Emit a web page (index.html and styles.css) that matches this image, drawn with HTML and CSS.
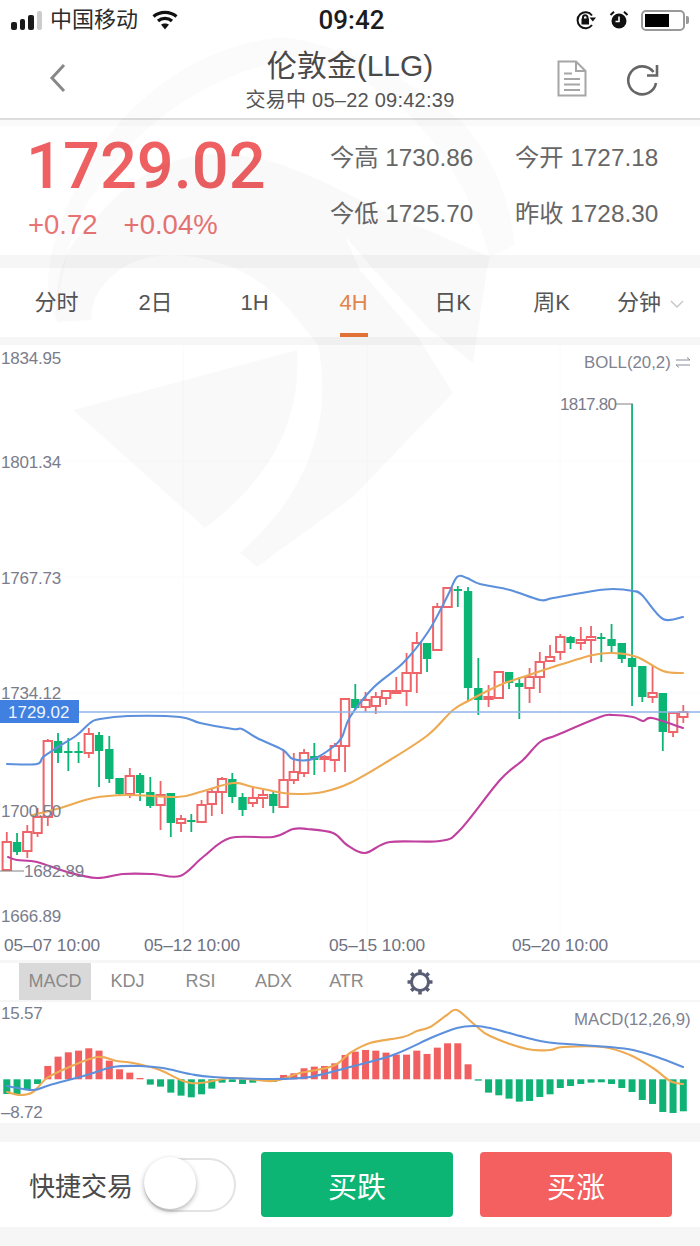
FILE: index.html
```html
<!DOCTYPE html>
<html lang="zh">
<head>
<meta charset="utf-8">
<title>伦敦金(LLG)</title>
<link rel="stylesheet" href="styles.css">
</head>
<body>
<div class="page">
  <header class="status">
    <div class="status-left">
      <div class="signal"><i class="s1"></i><i class="s2"></i><i class="s3"></i><i class="s4"></i></div>
      <span class="carrier">中国移动</span>
      <svg class="wifi" width="26" height="20" viewBox="0 0 26 20"><path d="M1.5 6.5C8 1 18 1 24.500 6.500" /><path d="M6 11C10 7.500 16 7.500 20 11" /><path class="wifi-dot" d="M13 19.500L9 14.500C11 13 15 13 17 14.500Z"/></svg>
    </div>
    <div class="time">09:42</div>
    <div class="status-right">
      <svg width="22" height="20" viewBox="0 0 22 20" class="lock"><path d="M17 5.500A8 8 0 1 0 17 15"/><path class="fill" d="M14.500 7.500H21L17.800 11.500Z"/><rect class="fill" x="6.500" y="8.500" width="7.500" height="6"/><path d="M8 9V7.500A2.200 2.200 0 0 1 12.500 7.500V9"/></svg>
      <svg width="20" height="20" viewBox="0 0 20 20" class="alarm"><circle class="fill" cx="10" cy="11" r="7.500"/><path class="hand" d="M10 6.500V11.500H6.500"/><path d="M1.500 5L5 1.800M18.500 5L15 1.800"/></svg>
      <div class="battery"><i></i></div>
    </div>
  </header>

  <nav class="nav">
    <svg class="back" width="18" height="30" viewBox="0 0 18 30"><path d="M15 2L3 15L15 28"/></svg>
    <div class="title-box">
      <h1 class="title">伦敦金(LLG)</h1>
      <p class="subtitle">交易中 05–22 09:42:39</p>
    </div>
    <svg class="doc" width="30" height="37" viewBox="0 0 30 37"><path d="M1.500 1.500H19L28.500 11V35.500H1.500Z"/><path d="M19 1.500V11H28.500"/><path d="M7 13.500H15M7 19H23M7 24.500H23M7 30H23"/></svg>
    <svg class="refresh" width="34" height="34" viewBox="0 0 34 34"><path d="M27.500 10A14 14 0 1 0 30 21"/><path d="M31 3V13.500H21"/></svg>
  </nav>

  <section class="quote">
    <div class="quote-main">
      <div class="price">1729.02</div>
      <div class="change"><span>+0.72</span><span>+0.04%</span></div>
    </div>
    <div class="stats">
      <div>今高 1730.86</div><div>今开 1727.18</div>
      <div>今低 1725.70</div><div>昨收 1728.30</div>
    </div>
  </section>

  <div class="band band-13"></div>

  <div class="tabs">
    <div class="tab">分时</div>
    <div class="tab">2日</div>
    <div class="tab">1H</div>
    <div class="tab tab-active">4H</div>
    <div class="tab">日K</div>
    <div class="tab">周K</div>
    <div class="tab">分钟<svg class="chev" width="14" height="8" viewBox="0 0 14 8"><path d="M1 1L7 7L13 1"/></svg></div>
  </div>

  <div class="band band-8"></div>

  <section class="chart">
    <svg id="kline" width="700" height="615" viewBox="0 345 700 615">
      <g id="grid"></g>
      <g id="candles"></g>
      <g id="boll"></g>
      <path class="price-line" d="M79 712H700"/>
      <path class="tick" d="M615 404H633M0 871H24"/>
      <text class="axis" x="1" y="364">1834.95</text>
      <text class="axis" x="1" y="468">1801.34</text>
      <text class="axis" x="1" y="584">1767.73</text>
      <text class="axis" x="1" y="699">1734.12</text>
      <text class="axis" x="1" y="817">1700.50</text>
      <text class="axis" x="24" y="877">1682.89</text>
      <text class="axis" x="1" y="922">1666.89</text>
      <text class="axis axis-tight" x="560" y="410">1817.80</text>
      <text class="axis-sm" x="584" y="368">BOLL(20,2)</text>
      <path class="swap" d="M676 360H690L687 357.500M690 365H676L679 367.500"/>
      <rect class="price-tag" x="0" y="700" width="79" height="23"/>
      <text class="price-tag-text" x="8" y="718">1729.02</text>
      <text class="date" x="4" y="951">05–07 10:00</text>
      <text class="date" x="144" y="951">05–12 10:00</text>
      <text class="date" x="329" y="951">05–15 10:00</text>
      <text class="date" x="512" y="951">05–20 10:00</text>
    </svg>
  </section>

  <div class="band band-3"></div>

  <div class="indicators">
    <div class="ind ind-active">MACD</div>
    <div class="ind">KDJ</div>
    <div class="ind">RSI</div>
    <div class="ind">ADX</div>
    <div class="ind">ATR</div>
    <div class="ind">
      <svg class="gear" width="28" height="28" viewBox="0 0 28 28"><circle cx="14" cy="14" r="8.500"/><path d="M14 1.500V5M14 23V26.500M1.500 14H5M23 14H26.500M5.200 5.200L7.600 7.600M20.400 20.400L22.800 22.800M22.800 5.200L20.400 7.600M7.600 20.400L5.200 22.800"/></svg>
    </div>
  </div>

  <div class="band band-2"></div>

  <section class="macd">
    <svg id="macd" width="700" height="121" viewBox="0 1002 700 121">
      <g id="bars"></g>
      <g id="macd-lines"></g>
      <text class="axis" x="1" y="1019">15.57</text>
      <text class="axis" x="1" y="1118">–8.72</text>
      <text class="axis-sm" x="574" y="1025">MACD(12,26,9)</text>
    </svg>
  </section>

  <div class="band band-19"></div>

  <section class="trade">
    <span class="trade-label">快捷交易</span>
    <div class="toggle"><i class="thumb"></i></div>
    <button class="btn btn-down">买跌</button>
    <button class="btn btn-up">买涨</button>
  </section>

  <div class="band band-rest"></div>

  <svg class="watermark" width="700" height="1246" viewBox="0 0 700 1246">
    <path class="wm-strong" d="M73 410L297 350C302 420 270 480 205 528Z"/>
    <path class="wm-faint" d="M47 300C48 255 55 235 70 200C110 110 190 45 283 37C350 45 420 85 465 125C495 160 510 200 515 245L490 257C470 190 430 120 370 85C340 68 320 60 300 58C210 70 130 130 97 190C75 215 62 260 57 322Z"/>
    <path class="wm-strong" d="M57 322C52 270 70 240 97 217C120 190 150 163 200 155C250 148 300 170 340 190C390 215 440 235 490 257L487 270L473 363L430 330L372 268L345 236L360 270L418 337L453 393L353 497L257 567L240 553C300 500 335 430 318 345L300 323C280 295 250 270 215 262C175 250 140 255 120 270C100 285 90 300 92 320Z"/>
  </svg>
</div>
<script src="chart.js"></script>
</body>
</html>
```

FILE: styles.css
```css
* { box-sizing: border-box; }
html, body { margin: 0; padding: 0; background: #fff; }
body { font-family: "Liberation Sans", "Noto Sans CJK SC", sans-serif; }
.page { position: relative; width: 700px; height: 1246px; overflow: hidden; display: flex; flex-direction: column; }

.status { height: 40px; flex: none; display: grid; grid-template-columns: 1fr auto 1fr; align-items: center; padding: 0 11px; color: #222; }
.status-left { display: flex; align-items: center; }
.signal { display: flex; align-items: flex-end; gap: 3px; height: 20px; width: 31px; }
.signal i { display: block; width: 5.500px; background: #1a1a1a; border-radius: 2px; }
.s1 { height: 8px; } .s2 { height: 11px; } .s3 { height: 15px; }
.signal .s4 { height: 19px; background: #ccc; }
.carrier { font-size: 22px; margin-left: 8px; line-height: 30px; color: #2b2b2b; }
.wifi { margin-left: 14px; }
.wifi path { fill: none; stroke: #111; stroke-width: 3.200; }
.wifi .wifi-dot { fill: #111; stroke: none; }
.time { font: 500 26px/30px Roboto, sans-serif; color: #1c1c1c; margin-left: 3px; }
.status-right { display: flex; align-items: center; justify-content: flex-end; gap: 12px; }
.lock path, .alarm path { fill: none; stroke: #111; stroke-width: 2; }
.lock .fill, .alarm .fill { fill: #111; stroke: none; }
.alarm .hand { stroke: #fff; stroke-width: 1.600; }
.battery { position: relative; width: 44px; height: 21px; border: 2px solid #999; border-radius: 5px; padding: 2px; margin-right: 4px; }
.battery i { display: block; width: 24px; height: 100%; background: #000; }
.battery::after { content: ""; position: absolute; left: 43px; top: 4px; width: 3px; height: 8px; background: #999; border-radius: 0 2px 2px 0; }

.nav { position: relative; height: 86px; flex: none; display: flex; align-items: flex-start; border-bottom: 6px solid #fafafa; box-shadow: inset 0 -2px 0 #ddd; }
.back { margin: 23px 0 0 49px; }
.back path { fill: none; stroke: #888; stroke-width: 3; }
.title-box { position: absolute; left: 0; right: 0; top: 6px; text-align: center; }
.title { margin: 0; font-size: 30px; font-weight: 400; line-height: 40px; color: #4a4a4a; }
.subtitle { margin: 1px 0 0; font-size: 20px; letter-spacing: .25px; line-height: 26px; color: #555; }
.doc { margin: 20px 0 0 490px; }
.doc path { fill: none; stroke: #a6a6a6; stroke-width: 2; }
.refresh { margin: 22px 0 0 39px; }
.refresh path { fill: none; stroke: #666; stroke-width: 2.600; }

.quote { height: 129px; flex: none; display: flex; padding-left: 28px; }
.quote-main { width: 305px; padding-top: 5px; }
.price { font: 500 65px/70px Roboto, sans-serif; color: #ee6062; white-space: nowrap; margin-left: -2px; }
.change { margin-top: 8px; display: flex; gap: 26px; font-size: 27.500px; line-height: 32px; color: #ea7474; }
.stats { display: grid; grid-template-columns: 185px 185px; grid-auto-rows: 56px; align-items: center; padding-top: 1px; font-size: 24.300px; color: #666; white-space: nowrap; align-content: start; }

.band { flex: none; background: #f6f6f6; }
.band-13 { height: 13px; }
.band-8 { height: 8px; }
.band-3 { height: 3px; }
.band-2 { height: 2px; }
.band-19 { height: 19px; }
.band-rest { flex: 1; }

.tabs { position: relative; height: 69px; flex: none; display: grid; grid-template-columns: repeat(7, 99px); padding-left: 7px; align-items: center; }
.tab { position: relative; text-align: center; font-size: 22px; line-height: 30px; color: #555; white-space: nowrap; }
.tab-active { color: #e8894a; }
.tab-active::after { content: ""; position: absolute; left: 36px; top: 45px; width: 28px; height: 4px; background: #e8743a; }
.chev { margin-left: 9px; vertical-align: 2px; }
.chev path { fill: none; stroke: #c4c4c4; stroke-width: 1.300; }

.chart { height: 615px; flex: none; }
.chart svg, .macd svg { display: block; }
.axis { font-size: 17px; letter-spacing: -.2px; fill: #7a7c8c; }
.axis-tight { letter-spacing: -.75px; }
.axis-sm { font-size: 16.800px; fill: #80828f; }
.date { font-size: 17.300px; fill: #6f7182; }
.gridline { stroke: #fafafa; stroke-width: 1; }
.price-line { stroke: #8fb4ea; stroke-width: 1.500; fill: none; }
.tick { stroke: #808080; stroke-width: 1; fill: none; }
.swap { stroke: #8a8c99; stroke-width: 1; fill: none; }
.price-tag { fill: #3f80e0; }
.price-tag-text { font-size: 17px; fill: #eef4ff; }
.wick-up { stroke: #ee6468; stroke-width: 1.800; }
.wick-down { stroke: #0bb574; stroke-width: 1.800; }
.body-up { fill: #fff; stroke: #ee6468; stroke-width: 2; }
.body-down { fill: #0bb574; }
.line { fill: none; stroke-width: 2.100; stroke-linejoin: round; stroke-linecap: round; }
.blue { stroke: #5c90dc; }
.orange { stroke: #edaa52; }
.magenta { stroke: #c13f9e; }

.indicators { height: 37px; flex: none; display: grid; grid-template-columns: repeat(6, 73px); padding-left: 18px; align-items: stretch; }
.ind { display: flex; align-items: center; justify-content: center; font-size: 18px; color: #8a8a8a; }
.ind-active { background: #d9d9d9; width: 72px; margin-left: 1px; }
.gear circle, .gear path { fill: none; stroke: #5a5e75; }
.gear circle { stroke-width: 3; }
.gear path { stroke-width: 3.600; }

.macd { height: 121px; flex: none; }
.bar-up { fill: #f25f60; }
.bar-down { fill: #0fb175; }

.trade { height: 85px; flex: none; display: flex; align-items: center; padding-left: 29px; }
.trade-label { width: 104px; font-size: 26px; color: #4a4a4a; white-space: nowrap; }
.toggle { position: relative; width: 92px; height: 54px; margin: 0 25px 0 11px; border: 2.500px solid #e3e3e3; border-radius: 27px; }
.thumb { position: absolute; left: -2.500px; top: -3px; width: 52px; height: 52px; border-radius: 50%; background: #fff; box-shadow: 0 2px 5px rgba(0,0,0,.3); }
.btn { width: 192px; height: 65px; border: 0; border-radius: 4px; color: #fff; font: 29px "Liberation Sans", "Noto Sans CJK SC", sans-serif; padding: 0; }
.btn-down { background: #0db574; margin-right: 27px; }
.btn-up { background: #f46060; }

.watermark { position: absolute; left: 0; top: 0; pointer-events: none; }
.wm-strong { fill: rgba(0,0,0,.025); }
.wm-faint { fill: rgba(0,0,0,.015); }
```

FILE: chart.js
```js
var NS = "http://www.w3.org/2000/svg";
function el(parent, tag, attrs) {
  var n = document.createElementNS(NS, tag);
  for (var k in attrs) n.setAttribute(k, attrs[k]);
  document.getElementById(parent).appendChild(n);
}
var X0 = 6.8, STEP = 10.25;

[183, 367, 560].forEach(function (x) { el("grid", "line", { "class": "gridline", x1: x, x2: x, y1: 345, y2: 960 }); });
[461, 577, 693, 810].forEach(function (y) { el("grid", "line", { "class": "gridline", x1: 0, x2: 700, y1: y, y2: y }); });

/* direction, body top, body bottom, wick top, wick bottom */
var candles = [
  ["u",842,870,832,870],["d",842,852,833,855],["u",832,851,825,858],["u",817,833,808,837],["u",741,817,739,826],
  ["d",741,753,733,763],["d",751,752,738,771],["d",751,752,742,763],["u",734,753,728,758],["d",735,751,732,787],
  ["d",749,779,736,783],["d",778,794,778,796],["u",776,794,768,798],["d",775,793,773,801],["d",792,806,777,808],
  ["u",795,805,781,830],["d",793,823,793,837],["u",819,823,815,832],["d",820,821,814,832],["u",805,822,800,822],
  ["u",792,804,788,816],["u",779,792,777,814],["d",779,797,773,803],["d",797,810,793,816],["u",798,803,787,807],
  ["u",795,798,789,808],["d",794,806,791,813],["u",780,807,750,807],["u",772,780,753,784],["u",753,773,749,777],
  ["d",756,760,743,775],["u",757,759,755,772],["u",746,760,743,772],["u",699,746,699,772],["d",699,708,684,710],
  ["u",700,707,692,712],["u",697,706,692,714],["u",691,698,691,705],["u",691,692,677,694],["u",673,691,653,706],
  ["u",643,673,632,693],["d",643,659,643,672],["u",607,650,603,650],["u",588,607,588,608],["d",589,591,586,607],
  ["d",591,688,587,700],["d",688,700,658,715],["u",697,699,685,707],["u",672,698,672,699],["d",672,683,672,689],
  ["d",683,687,677,719],["u",677,688,668,703],["u",662,677,652,693],["u",657,661,645,662],["u",637,652,634,660],
  ["d",637,643,636,649],["u",640,643,627,650],["u",637,640,626,663],["d",637,639,633,662],["d",639,646,624,652],
  ["d",643,659,643,663],["d",658,667,404,706],["d",666,697,666,702],["u",693,697,665,703],["d",693,732,693,751],
  ["u",713,732,713,737],["u",712,717,705,723]
];
candles.forEach(function (c, i) {
  var x = X0 + STEP * i, up = c[0] === "u";
  el("candles", "line", { "class": up ? "wick-up" : "wick-down", x1: x, x2: x, y1: c[3], y2: c[4] });
  el("candles", "rect", { "class": up ? "body-up" : "body-down", x: x - 4.2, y: c[1], width: 8.4, height: Math.max(c[2] - c[1], 2) });
});

/* Catmull-Rom curve through the sampled points */
function curve(parent, cls, p) {
  var d = "M" + p[0][0] + " " + p[0][1];
  for (var i = 0; i < p.length - 1; i++) {
    var a = p[Math.max(i - 1, 0)], b = p[i], c = p[i + 1], e = p[Math.min(i + 2, p.length - 1)];
    d += "C" + (b[0] + (c[0] - a[0]) / 6).toFixed(1) + " " + (b[1] + (c[1] - a[1]) / 6).toFixed(1) + " " +
         (c[0] - (e[0] - b[0]) / 6).toFixed(1) + " " + (c[1] - (e[1] - b[1]) / 6).toFixed(1) + " " + c[0] + " " + c[1];
  }
  el(parent, "path", { "class": "line " + cls, d: d });
}
curve("boll", "magenta", [[8,857],[17,860],[37,862],[67,872],[97,878],[123,874],[153,874],[180,876],[203,857],[230,838],[273,837],[293,829],[307,829],[333,833],[347,845],[365,853],[390,842],[440,841],[460,830],[500,780],[523,760],[540,742],[557,735],[600,717],[613,715],[633,717],[643,721],[652,718],[683,728]]);
curve("boll", "orange", [[33,815],[60,808],[93,798],[127,795],[177,797],[200,792],[233,783],[253,787],[283,793],[300,794],[323,792],[350,783],[390,760],[428,735],[453,710],[470,700],[500,685],[523,677],[553,667],[593,655],[613,653],[637,657],[663,671],[683,673]]);
curve("boll", "blue", [[7,764],[37,764],[43,757],[58,747],[77,735],[90,723],[100,719],[128,716],[180,717],[200,723],[233,729],[242,729],[257,738],[283,750],[293,759],[313,759],[333,747],[342,737],[350,717],[373,688],[403,663],[428,632],[447,597],[457,577],[467,578],[480,584],[510,590],[540,600],[553,598],[593,591],[613,589],[633,591],[642,595],[663,619],[683,617]]);

/* MACD: bar end in 3x crop coordinates; 358 is the zero line */
var hist = [402,402,388,372,318,290,277,272,265,272,302,328,338,354,374,380,398,407,412,403,386,368,366,372,368,360,366,345,340,325,320,318,310,285,275,270,272,278,284,284,272,282,263,250,250,313,362,398,406,416,425,423,411,403,384,378,372,368,367,372,384,396,420,432,456,459,454];
var ZERO = 1079.3;
hist.forEach(function (v, i) {
  var x = X0 + STEP * i, h = Math.abs(v - 358) / 3, up = v < 358;
  el("bars", "rect", { "class": up ? "bar-up" : "bar-down", x: x - 3.5, y: up ? ZERO - h : ZERO, width: 7, height: Math.max(h, 1) });
});
curve("macd-lines", "orange", [[7,1092],[20,1095],[33,1092],[47,1078],[67,1068],[97,1057],[117,1061],[133,1063],[160,1070],[183,1081],[200,1083],[233,1078],[273,1081],[300,1073],[333,1066],[350,1053],[370,1043],[403,1037],[417,1031],[430,1027],[447,1015],[457,1010],[475,1025],[490,1036],[527,1049],[550,1050],[563,1047],[603,1047],[630,1055],[653,1068],[670,1081],[683,1084]]);
curve("macd-lines", "blue", [[7,1086],[33,1090],[50,1085],[87,1075],[113,1067],[140,1066],[163,1068],[190,1074],[213,1077],[273,1079],[310,1077],[350,1067],[393,1055],[433,1037],[457,1028],[473,1026],[490,1028],[540,1041],[567,1044],[610,1047],[633,1050],[657,1057],[683,1067]]);
```
